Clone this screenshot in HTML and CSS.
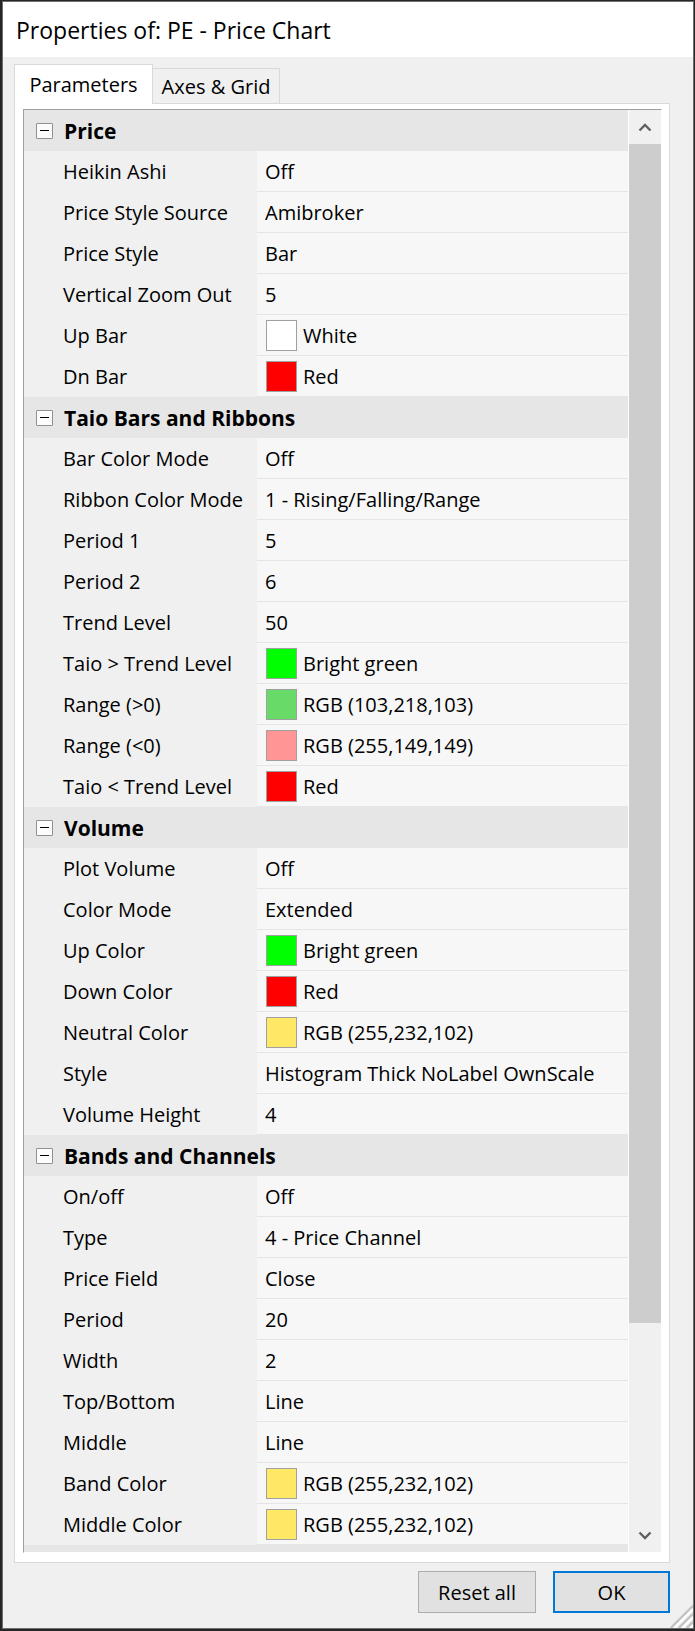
FILE: index.html
```html
<!DOCTYPE html>
<html lang="en">
<head>
  <meta charset="UTF-8">
  <title>Properties of: PE - Price Chart</title>
  <link rel="stylesheet" href="styles.css">
</head>
<body>
  <div class="window">
    <div class="titlebar">Properties of: PE - Price Chart</div>

    <div class="dialog">
      <div class="tabs">
        <div class="tab active">Parameters</div>
        <div class="tab">Axes &amp; Grid</div>
      </div>

      <div class="panel">
        <div class="grid-box">
          <div class="rows">
            <div class="section"><span class="toggle"></span>Price</div>
            <div class="row"><div class="label">Heikin Ashi</div><div class="value">Off</div></div>
            <div class="row"><div class="label">Price Style Source</div><div class="value">Amibroker</div></div>
            <div class="row"><div class="label">Price Style</div><div class="value">Bar</div></div>
            <div class="row"><div class="label">Vertical Zoom Out</div><div class="value">5</div></div>
            <div class="row"><div class="label">Up Bar</div><div class="value"><span class="swatch sw-white"></span>White</div></div>
            <div class="row"><div class="label">Dn Bar</div><div class="value"><span class="swatch sw-red"></span>Red</div></div>

            <div class="section"><span class="toggle"></span>Taio Bars and Ribbons</div>
            <div class="row"><div class="label">Bar Color Mode</div><div class="value">Off</div></div>
            <div class="row"><div class="label">Ribbon Color Mode</div><div class="value">1 - Rising/Falling/Range</div></div>
            <div class="row"><div class="label">Period 1</div><div class="value">5</div></div>
            <div class="row"><div class="label">Period 2</div><div class="value">6</div></div>
            <div class="row"><div class="label">Trend Level</div><div class="value">50</div></div>
            <div class="row"><div class="label">Taio &gt; Trend Level</div><div class="value"><span class="swatch sw-green"></span>Bright green</div></div>
            <div class="row"><div class="label">Range (&gt;0)</div><div class="value"><span class="swatch sw-lgreen"></span>RGB (103,218,103)</div></div>
            <div class="row"><div class="label">Range (&lt;0)</div><div class="value"><span class="swatch sw-pink"></span>RGB (255,149,149)</div></div>
            <div class="row"><div class="label">Taio &lt; Trend Level</div><div class="value"><span class="swatch sw-red"></span>Red</div></div>

            <div class="section"><span class="toggle"></span>Volume</div>
            <div class="row"><div class="label">Plot Volume</div><div class="value">Off</div></div>
            <div class="row"><div class="label">Color Mode</div><div class="value">Extended</div></div>
            <div class="row"><div class="label">Up Color</div><div class="value"><span class="swatch sw-green"></span>Bright green</div></div>
            <div class="row"><div class="label">Down Color</div><div class="value"><span class="swatch sw-red"></span>Red</div></div>
            <div class="row"><div class="label">Neutral Color</div><div class="value"><span class="swatch sw-yellow"></span>RGB (255,232,102)</div></div>
            <div class="row"><div class="label">Style</div><div class="value">Histogram Thick NoLabel OwnScale</div></div>
            <div class="row"><div class="label">Volume Height</div><div class="value">4</div></div>

            <div class="section"><span class="toggle"></span>Bands and Channels</div>
            <div class="row"><div class="label">On/off</div><div class="value">Off</div></div>
            <div class="row"><div class="label">Type</div><div class="value">4 - Price Channel</div></div>
            <div class="row"><div class="label">Price Field</div><div class="value">Close</div></div>
            <div class="row"><div class="label">Period</div><div class="value">20</div></div>
            <div class="row"><div class="label">Width</div><div class="value">2</div></div>
            <div class="row"><div class="label">Top/Bottom</div><div class="value">Line</div></div>
            <div class="row"><div class="label">Middle</div><div class="value">Line</div></div>
            <div class="row"><div class="label">Band Color</div><div class="value"><span class="swatch sw-yellow"></span>RGB (255,232,102)</div></div>
            <div class="row"><div class="label">Middle Color</div><div class="value"><span class="swatch sw-yellow"></span>RGB (255,232,102)</div></div>

            <div class="section"></div>
          </div>

          <div class="scrollbar">
            <div class="sb-btn">
              <svg width="14" height="9" viewBox="0 0 14 9"><path d="M1.5 7.5 L7 2 L12.5 7.5" fill="none" stroke="#606060" stroke-width="2.4"/></svg>
            </div>
            <div class="sb-track"><div class="sb-thumb"></div></div>
            <div class="sb-btn">
              <svg width="14" height="9" viewBox="0 0 14 9"><path d="M1.5 1.5 L7 7 L12.5 1.5" fill="none" stroke="#606060" stroke-width="2.4"/></svg>
            </div>
          </div>
        </div>
      </div>

      <div class="buttons">
        <button class="btn">Reset all</button>
        <button class="btn default">OK</button>
      </div>
    </div>

    <svg class="grip" width="25" height="25" viewBox="0 0 25 25">
      <path d="M25 3 L3 25 M25 11 L11 25 M25 19 L19 25" stroke="#c4c4c4" stroke-width="2.5"/>
      <path d="M25 6 L6 25 M25 14 L14 25 M25 22 L22 25" stroke="#ffffff" stroke-width="2"/>
    </svg>
  </div>
</body>
</html>
```

FILE: styles.css
```css
body {
  margin: 0;
  background: #262626;
  font-family: "Open Sans", "Noto Sans", sans-serif;
  color: #000;
}

.window {
  position: relative;
  box-sizing: border-box;
  width: 692px;
  height: 1628px;
  margin: 1px 1px 0 2px;
  border: 1px solid #6f6f6f;
  background: #f0f0f0;
}

.titlebar {
  height: 55px;
  background: #fff;
  padding-left: 13px;
  display: flex;
  align-items: center;
  font-size: 23px;
}

.dialog {
  box-sizing: border-box;
  height: 1571px;
  padding: 7px 23px 0 11px;
}

/* tabs */
.tabs {
  display: flex;
  align-items: flex-end;
  height: 39px;
  position: relative;
  z-index: 1;
}

.tab {
  box-sizing: border-box;
  width: 127px;
  height: 35px;
  border: 1px solid #d9d9d9;
  border-left: none;
  border-bottom: none;
  background: #f0f0f0;
  display: flex;
  align-items: center;
  justify-content: center;
  font-size: 20px;
}

.tab.active {
  width: 139px;
  height: 40px;
  margin-bottom: -1px;
  border-left: 1px solid #d9d9d9;
  background: #fff;
}

.panel {
  box-sizing: border-box;
  height: 1460px;
  background: #fff;
  border: 1px solid #d9d9d9;
  padding: 5px 7px 9px 8px;
}

/* property grid */
.grid-box {
  box-sizing: border-box;
  display: flex;
  height: 1444px;
  overflow: hidden;
  border-top: 1px solid #a0a0a0;
  border-left: 1px solid #a0a0a0;
  border-right: 1px solid #fff;
  border-bottom: 1px solid #fff;
}

.rows {
  width: 604px;
  overflow: hidden;
  font-size: 20px;
}

.section {
  height: 41px;
  flex-shrink: 0;
  background: #e6e6e6;
  display: flex;
  align-items: center;
  padding-left: 12px;
  font-size: 21px;
  font-weight: bold;
}

.toggle {
  box-sizing: border-box;
  position: relative;
  width: 17px;
  height: 16px;
  margin-right: 11px;
  border: 1px solid #919191;
  border-radius: 1px;
  background: #fcfcfc;
}

.toggle::after {
  content: "";
  position: absolute;
  left: 3px;
  top: 6px;
  width: 9px;
  height: 1.5px;
  background: #000;
}

.row {
  display: flex;
  height: 41px;
}

.label {
  box-sizing: border-box;
  width: 233px;
  padding-left: 39px;
  background: #f0f0f0;
  display: flex;
  align-items: center;
  white-space: nowrap;
}

.value {
  flex: 1;
  padding-left: 8px;
  background: #f7f7f7;
  border-bottom: 1px solid #e5e5e5;
  display: flex;
  align-items: center;
  white-space: nowrap;
}

.swatch {
  box-sizing: border-box;
  width: 31px;
  height: 31px;
  margin: 0 6px 0 1px;
  border: 1px solid #a0a0a0;
}

.sw-white { background: #ffffff; }
.sw-red { background: #ff0000; }
.sw-green { background: #00ff00; }
.sw-lgreen { background: #67da67; }
.sw-pink { background: #ff9595; }
.sw-yellow { background: #ffe866; }

/* scrollbar */
.scrollbar {
  box-sizing: border-box;
  width: 33px;
  border-left: 1px solid #fff;
  background: #f0f0f0;
  display: flex;
  flex-direction: column;
}

.sb-btn {
  height: 34px;
  display: flex;
  align-items: center;
  justify-content: center;
}

.sb-track {
  flex: 1;
}

.sb-thumb {
  height: 1179px;
  background: #cdcdcd;
}

/* buttons */
.buttons {
  display: flex;
  justify-content: flex-end;
  gap: 17px;
  margin-top: 8px;
}

.btn {
  box-sizing: border-box;
  width: 118px;
  height: 42px;
  background: #e1e1e1;
  border: 1px solid #adadad;
  font-family: inherit;
  font-size: 20px;
  color: #000;
  padding: 0;
}

.btn.default {
  width: 117px;
  border: 2px solid #0078d7;
}

.grip {
  position: absolute;
  right: 0;
  bottom: 0;
}
```
